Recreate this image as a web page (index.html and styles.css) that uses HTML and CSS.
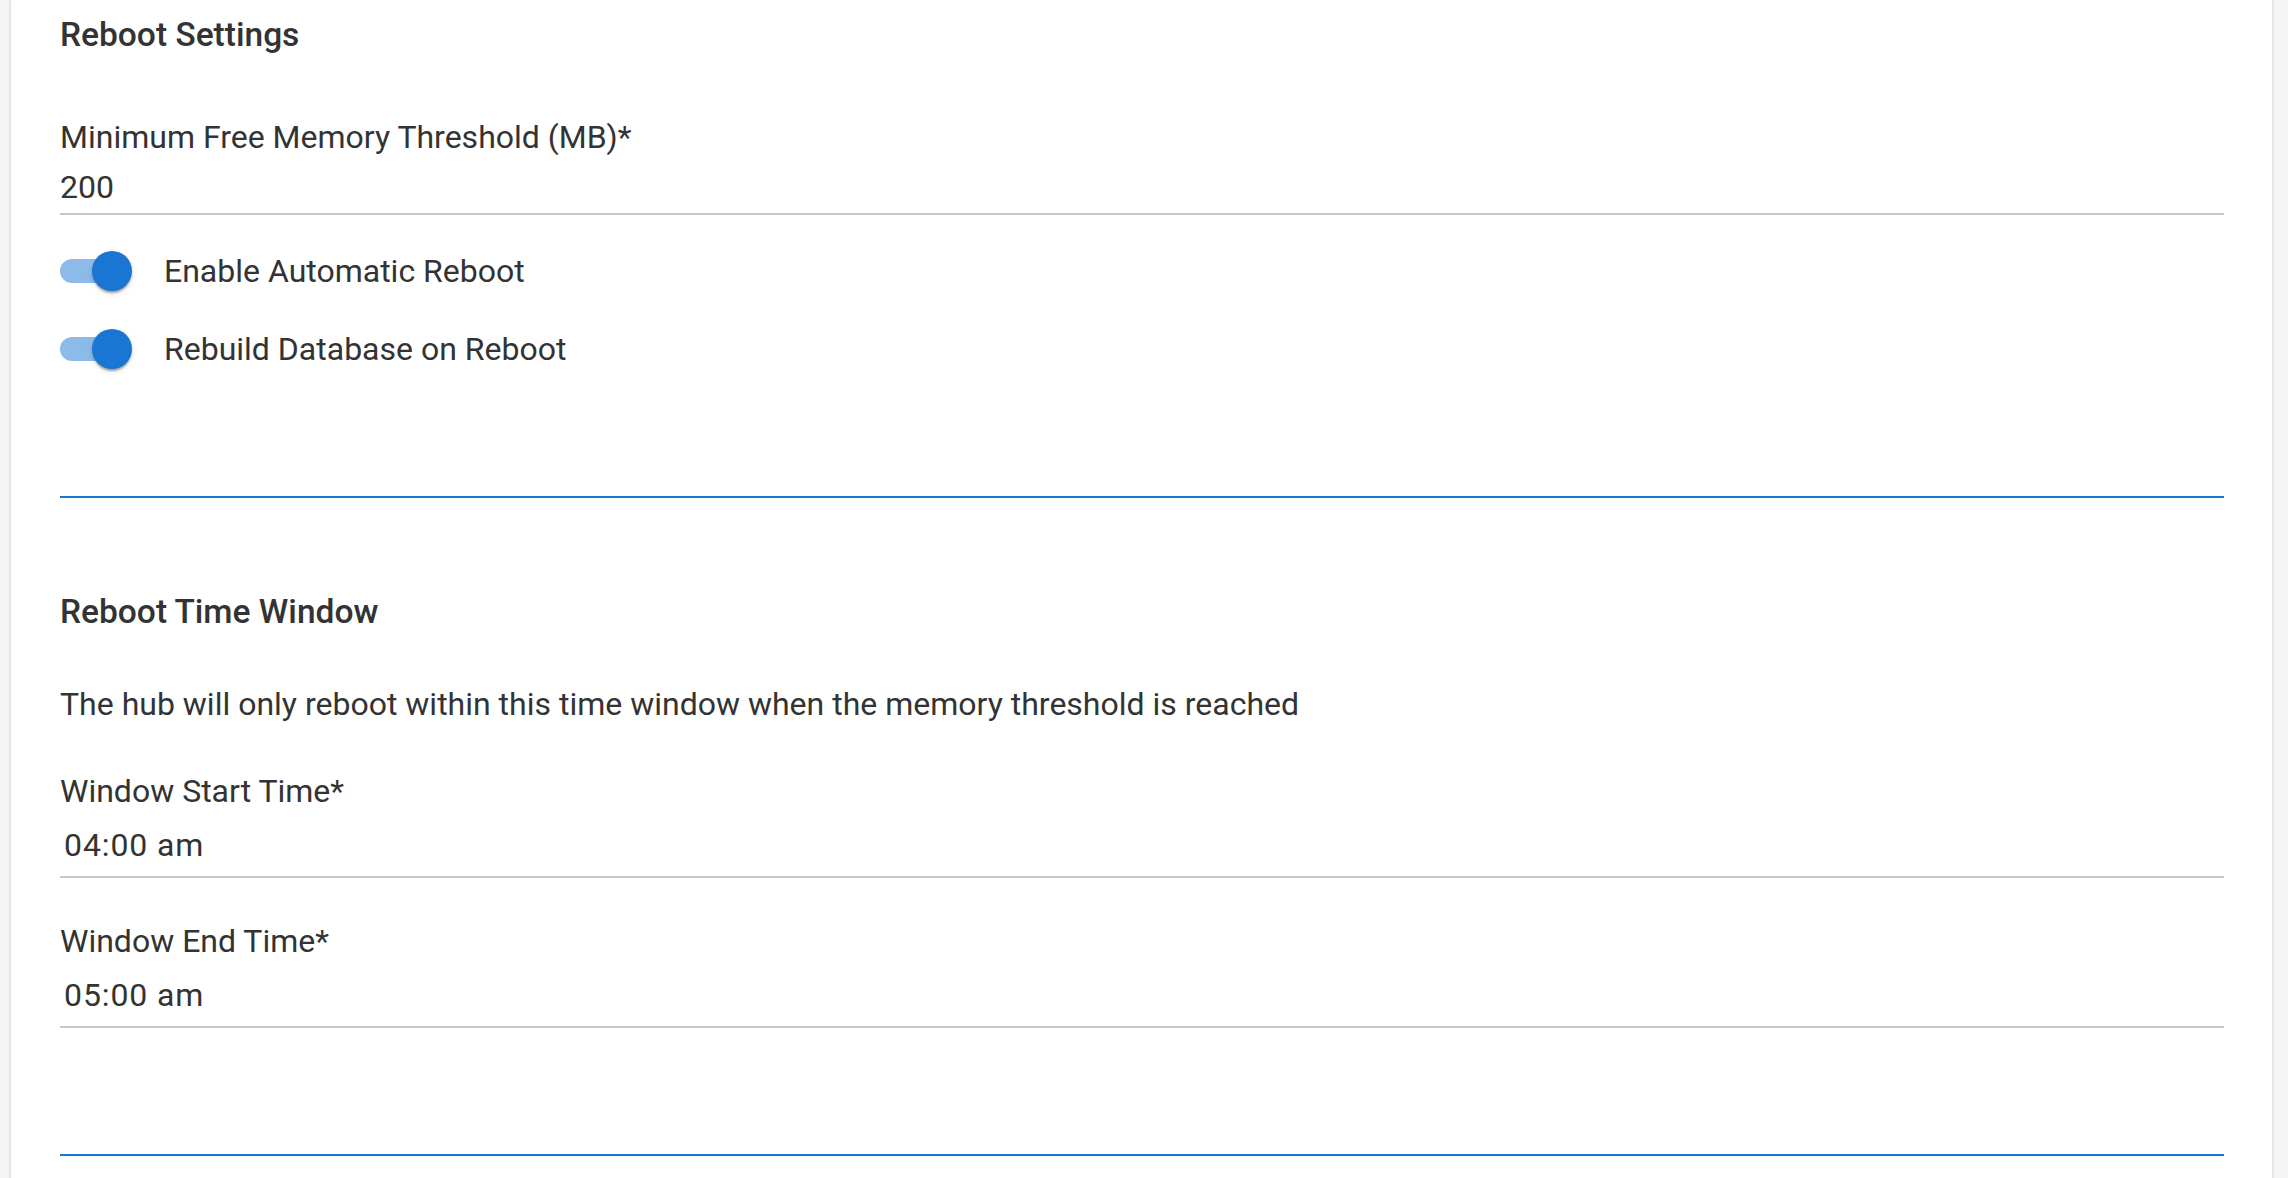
FILE: index.html
```html
<!DOCTYPE html>
<html lang="en">
<head>
<meta charset="utf-8">
<title>Reboot Settings</title>
<link rel="stylesheet" href="styles.css">
</head>
<body>
<div class="card">
  <h2 class="section-title first">Reboot Settings</h2>
  <div class="field field-mem">
    <div class="field-label">Minimum Free Memory Threshold (MB)*</div>
    <div class="field-value">200</div>
  </div>
  <div class="switches">
    <div class="switch-row">
      <span class="switch"><span class="track"></span><span class="thumb"></span></span>
      <span class="switch-label">Enable Automatic Reboot</span>
    </div>
    <div class="switch-row">
      <span class="switch"><span class="track"></span><span class="thumb"></span></span>
      <span class="switch-label">Rebuild Database on Reboot</span>
    </div>
  </div>
  <div class="divider divider-1"></div>

  <h2 class="section-title second">Reboot Time Window</h2>
  <p class="desc">The hub will only reboot within this time window when the memory threshold is reached</p>
  <div class="field field-time">
    <div class="field-label">Window Start Time*</div>
    <div class="field-value time">04:00 am</div>
  </div>
  <div class="field field-time field-time-2">
    <div class="field-label">Window End Time*</div>
    <div class="field-value time">05:00 am</div>
  </div>
  <div class="divider divider-2"></div>
</div>
</body>
</html>
```
FILE: styles.css
```css
html, body {
  margin: 0;
  padding: 0;
}
body {
  background: #f5f5f5;
  font-family: Roboto, "Liberation Sans", Arial, sans-serif;
  color: #333333;
  overflow: hidden;
}
.card {
  margin: 0 16px 0 11px;
  padding: 11px 48px 40px 49px;
  background: #ffffff;
  box-shadow: 0 0 4px rgba(0, 0, 0, 0.14), 0 0 2px rgba(0, 0, 0, 0.08);
  min-height: 1178px;
  box-sizing: border-box;
}
.section-title {
  margin: 0;
  font-family: "Roboto Medium", Roboto, "Liberation Sans", Arial, sans-serif;
  font-size: 33.5px;
  line-height: 48px;
  font-weight: 500;
  color: #333333;
}
.section-title.second {
  margin-top: 90px;
}
.field {
  margin-top: 54px;
}
.field-label {
  font-size: 32px;
  line-height: 48px;
}
.field-value {
  font-size: 32px;
  line-height: 48px;
  margin-top: 2px;
  padding-bottom: 2px;
  border-bottom: 2px solid #c6c6c6;
}
.field-value.time {
  padding-left: 4px;
  margin-top: 6px;
  padding-bottom: 7px;
  letter-spacing: 0.9px;
}
.field-time {
  margin-top: 39px;
}
.field-time-2 {
  margin-top: 39px;
}
.switches {
  margin-top: 17px;
}
.switch-row {
  height: 78px;
  display: flex;
  align-items: center;
}
.switch {
  position: relative;
  width: 72px;
  height: 40px;
  flex: none;
}
.track {
  position: absolute;
  left: 0;
  top: 8px;
  width: 68px;
  height: 24px;
  border-radius: 12px;
  background: #8dbbe9;
}
.thumb {
  position: absolute;
  left: 32px;
  top: 0;
  width: 40px;
  height: 40px;
  border-radius: 50%;
  background: #1976d2;
  box-shadow: 0 4px 2px -2px rgba(0, 0, 0, 0.2), 0 2px 2px 0 rgba(0, 0, 0, 0.14), 0 2px 6px 0 rgba(0, 0, 0, 0.12);
}
.switch-label {
  margin-left: 32px;
  font-size: 32px;
  line-height: 48px;
}
.divider {
  height: 2px;
  background: #1976d2;
}
.divider-1 {
  margin-top: 108px;
}
.divider-2 {
  margin-top: 126px;
}
.desc {
  margin: 44px 0 0;
  font-size: 32px;
  line-height: 48px;
}
```
